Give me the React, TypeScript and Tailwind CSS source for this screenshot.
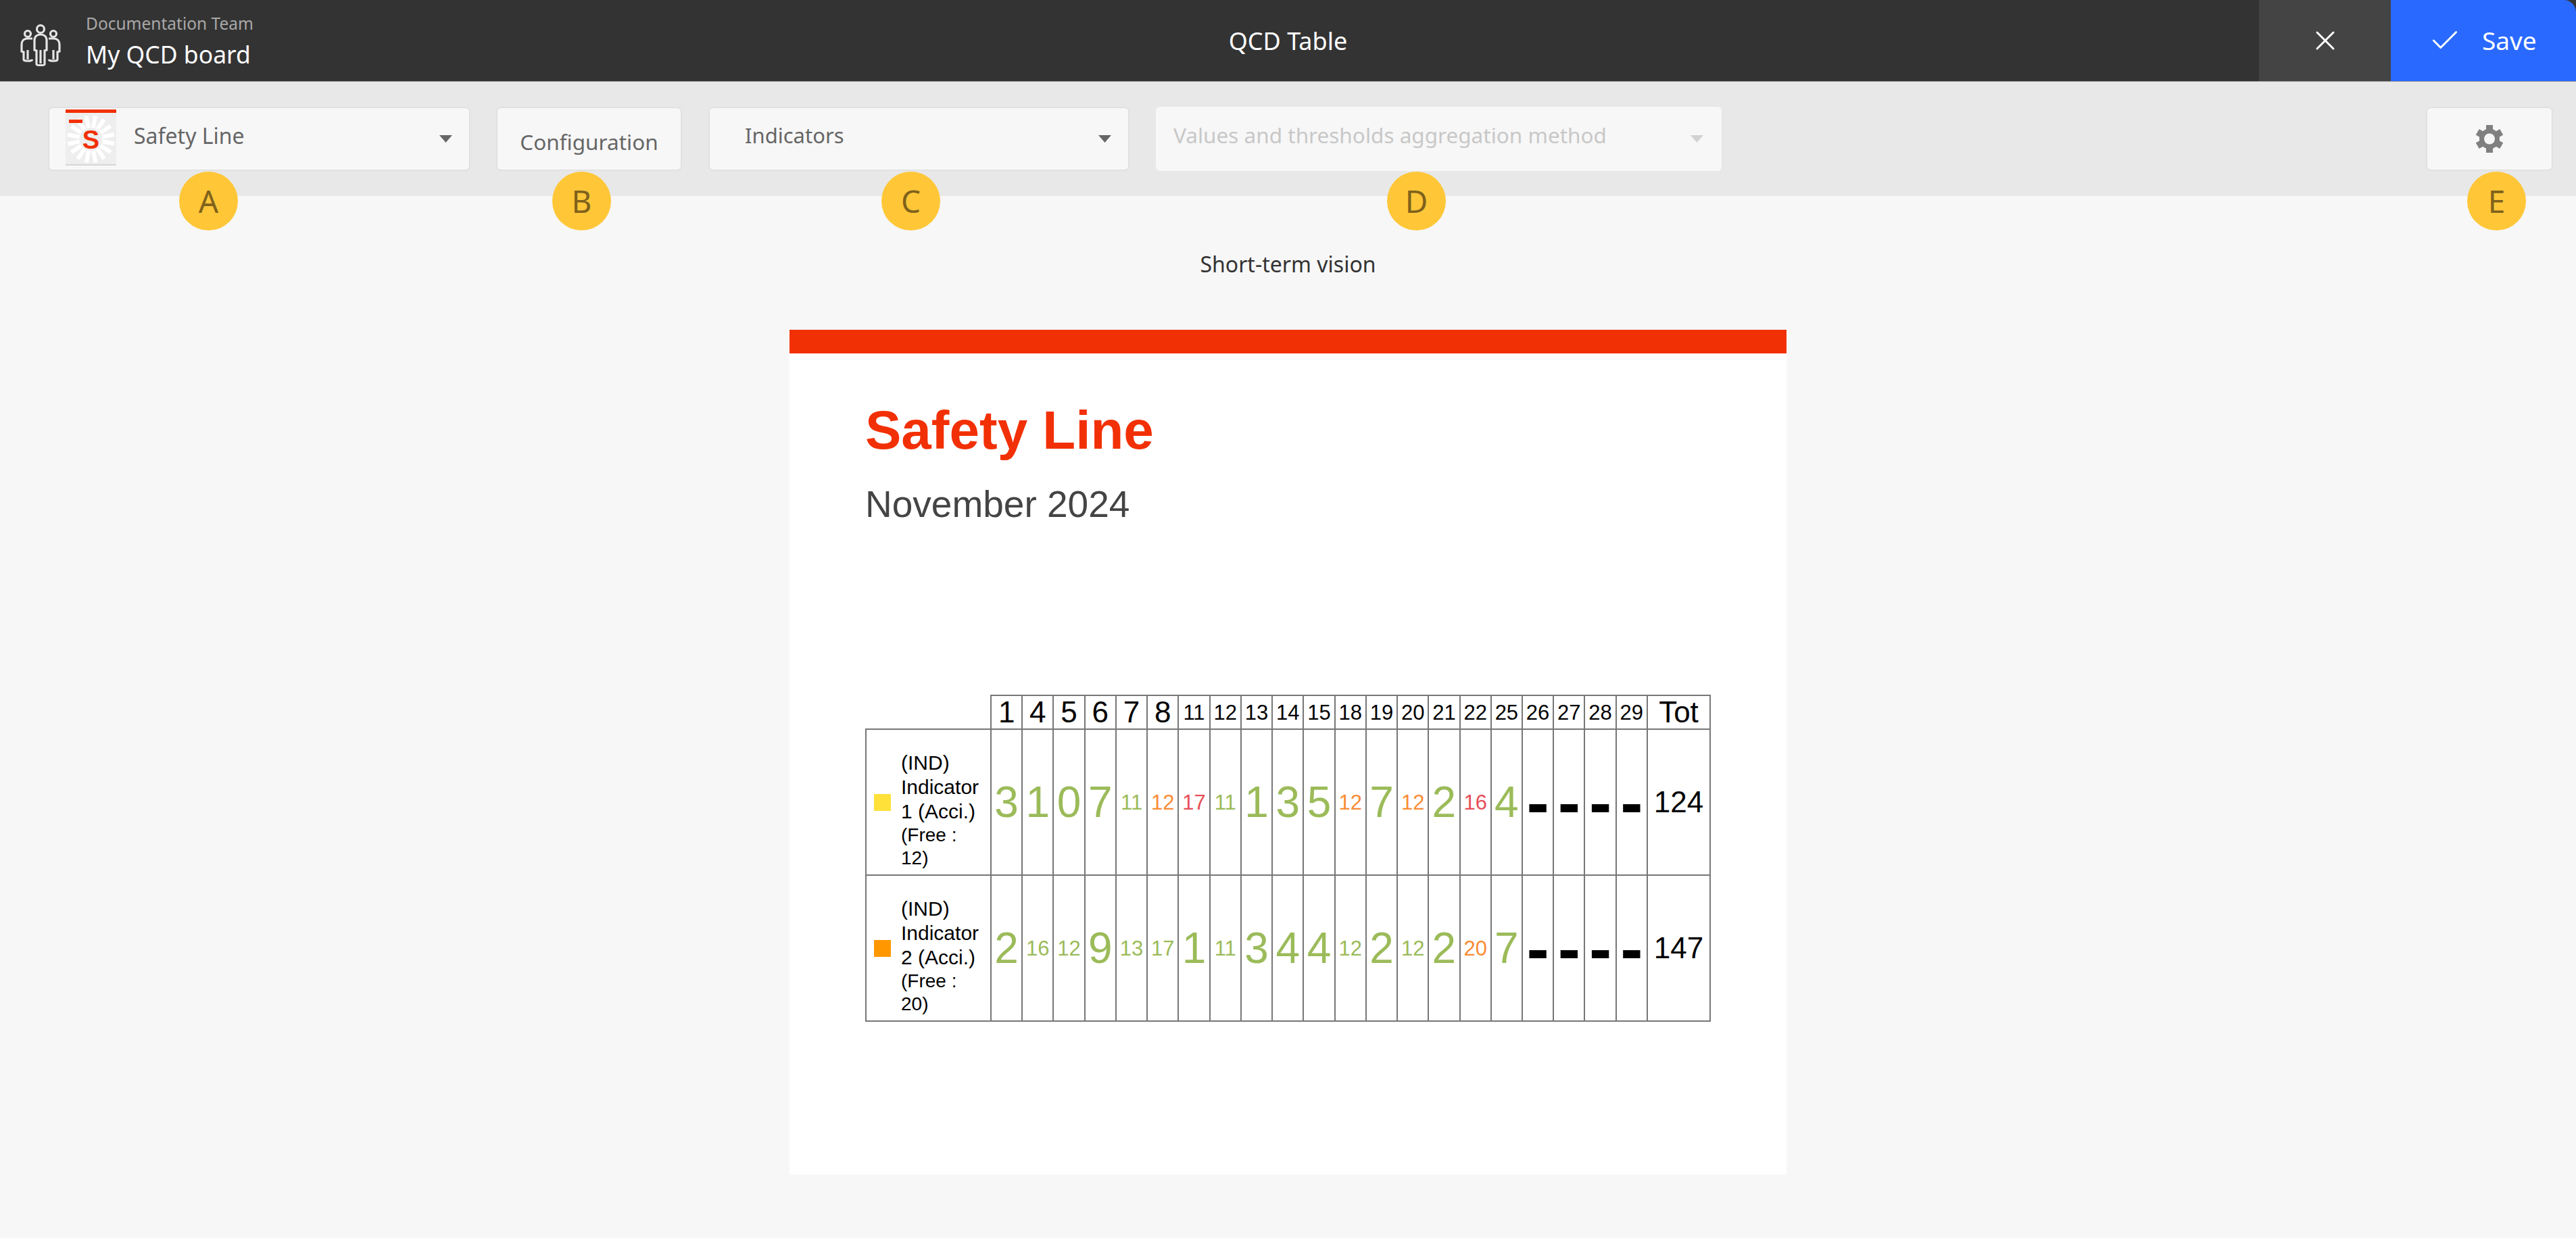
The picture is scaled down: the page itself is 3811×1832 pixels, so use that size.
import { X, Check } from 'lucide-react';

const days = [1, 4, 5, 6, 7, 8, 11, 12, 13, 14, 15, 18, 19, 20, 21, 22, 25, 26, 27, 28, 29];

const rows = [
  {
    swatch: 'bg-[#ffe13a]',
    num: 1,
    free: 12,
    total: 124,
    values: [
      [3, 'g'], [1, 'g'], [0, 'g'], [7, 'g'], [11, 'g'], [12, 'o'], [17, 'r'], [11, 'g'], [1, 'g'], [3, 'g'], [5, 'g'],
      [12, 'o'], [7, 'g'], [12, 'o'], [2, 'g'], [16, 'r'], [4, 'g'],
    ],
  },
  {
    swatch: 'bg-[#ff9800]',
    num: 2,
    free: 20,
    total: 147,
    values: [
      [2, 'g'], [16, 'g'], [12, 'g'], [9, 'g'], [13, 'g'], [17, 'g'], [1, 'g'], [11, 'g'], [3, 'g'], [4, 'g'], [4, 'g'],
      [12, 'g'], [2, 'g'], [12, 'g'], [2, 'g'], [20, 'o'], [7, 'g'],
    ],
  },
] as { swatch: string; num: number; free: number; total: number; values: [number, string][] }[];

const tones: Record<string, string> = { g: 'text-[#9bbb59]', o: 'text-[#f98c35]', r: 'text-[#e64f57]' };

function TeamIcon() {
  return (
    <svg viewBox="0 0 62 62" className="w-[62px] h-[62px]" fill="none" stroke="#e4e4e4" strokeWidth="3.2">
      <circle cx="31" cy="7" r="5.5" />
      <circle cx="12" cy="14" r="4.5" />
      <circle cx="50" cy="14" r="4.5" />
      <path d="M22 24c0-6 4-9 9-9s9 3 9 9v14l-3 1v20c0 2-12 2-12 0V39l-3-1z" />
      <path d="M31 38v20" />
      <path d="M19 21h-7c-6 0-9 4-9 9v10l3 1v11c0 3 12 3 13 0" />
      <path d="M43 21h7c6 0 9 4 9 9v10l-3 1v11c0 3-12 3-13 0" />
      <path d="M12 38v14M50 38v14" />
    </svg>
  );
}

function Thumb() {
  const ticks = Array.from({ length: 16 }, (_, i) => i * 22.5 + 11);
  return (
    <svg viewBox="0 0 75 83" className="w-[75px] h-[83px] shrink-0">
      <rect width="75" height="83" fill="#eeeeee" />
      <rect width="75" height="5" fill="#f23005" />
      <rect y="81" width="75" height="2" fill="#d6d6d6" />
      {ticks.map((a) => (
        <rect key={a} x="34.5" y="9" width="6" height="18" fill="#ffffff" transform={`rotate(${a} 37.5 44)`} />
      ))}
      <rect x="5" y="15" width="20" height="5" fill="#f23005" />
      <text x="37.5" y="58" textAnchor="middle" fontFamily="Liberation Sans" fontWeight="700" fontSize="38" fill="#f23005">
        S
      </text>
    </svg>
  );
}

function Gear() {
  return (
    <svg viewBox="0 0 40 41" className="w-[40px] h-[41px]">
      {[0, 60, 120].map((a) => (
        <rect key={a} x="15" y="0" width="10" height="41" fill="#808080" transform={`rotate(${a} 20 20.5)`} />
      ))}
      <circle cx="20" cy="20.5" r="11.5" fill="none" stroke="#808080" strokeWidth="7" />
      <circle cx="20" cy="20.5" r="8" fill="#f7f7f7" />
    </svg>
  );
}

function Caret({ light }: { light?: boolean }) {
  return (
    <svg viewBox="0 0 19 11" className="w-[19px] h-[11px]">
      <path d="M0 0h19L9.5 11z" fill={light ? '#d2d2d2' : '#666666'} />
    </svg>
  );
}

function Badge({ letter, className }: { letter: string; className: string }) {
  return (
    <div
      className={`absolute top-[133px] w-[87px] h-[87px] rounded-full bg-[#ffc738] flex items-center justify-center text-[46px] text-[#80621b] ${className}`}
    >
      {letter}
    </div>
  );
}

export default function App() {
  return (
    <div className="h-screen overflow-hidden bg-[#f7f7f7] font-['Noto_Sans',sans-serif]">
      {/* Header */}
      <header className="h-[121px] bg-[#333333] border-b border-[#9a9a9a] flex items-stretch relative">
        <div className="w-[127px] flex items-center pl-[29px] pt-[13px]">
          <TeamIcon />
        </div>
        <div className="flex-1 pt-[18px]">
          <p className="text-[24.5px] leading-[34px] text-[#a8a8a8]">Documentation Team</p>
          <p className="mt-[4px] text-[35.5px] leading-[48px] text-white">My QCD board</p>
        </div>
        <p className="absolute left-0 right-0 top-[37px] text-center text-[36px] leading-[48px] text-white">QCD Table</p>
        <button className="relative w-[195px] bg-[#444444] flex items-center justify-center text-white">
          <X className="w-[48px] h-[48px]" strokeWidth={1.5} />
        </button>
        <button className="relative w-[274px] bg-[#2969ff] rounded-tr-[18px] flex items-center pl-[55px] gap-[30px] text-white text-[37px]">
          <Check className="w-[50px] h-[50px]" strokeWidth={1.4} />
          Save
        </button>
      </header>

      {/* Toolbar */}
      <div className="relative h-[169px] bg-[#e8e8e8] flex items-start pt-[38px] pl-[72px] pr-[35px] text-[#666666] text-[31.5px]">
        <div className="w-[623px] h-[93px] rounded-[6px] border border-[#dedede] shadow-[0_0_2px_#d8d8d8] bg-[#f7f7f7] flex items-start pl-[24px] pr-[25px]">
          <div className="pt-[2px]">
            <Thumb />
          </div>
          <span className="ml-[26px] pt-[17px] text-[32px]">Safety Line</span>
          <div className="ml-auto pt-[40px]">
            <Caret />
          </div>
        </div>
        <div className="ml-[40px] w-[273px] h-[93px] rounded-[6px] border border-[#dedede] shadow-[0_0_2px_#d8d8d8] bg-[#f7f7f7] flex items-start justify-center pt-[26px]">
          Configuration
        </div>
        <div className="ml-[41px] w-[621px] h-[93px] rounded-[6px] border border-[#dedede] shadow-[0_0_2px_#d8d8d8] bg-[#f7f7f7] flex items-start pl-[52px] pr-[25px] pt-[17px] text-[31px]">
          Indicators
          <div className="ml-auto pt-[23px]">
            <Caret />
          </div>
        </div>
        <div className="ml-[40px] w-[837px] h-[95px] -mt-[1px] rounded-[6px] bg-[#f7f7f7] flex items-start pl-[26px] pr-[27px] pt-[18px] text-[#c8c8c8]">
          Values and thresholds aggregation method
          <div className="ml-auto pt-[24px]">
            <Caret light />
          </div>
        </div>
        <div className="ml-auto w-[186px] h-[93px] rounded-[6px] border border-[#dedede] shadow-[0_0_2px_#d8d8d8] bg-[#f7f7f7] flex items-center justify-center">
          <Gear />
        </div>
        <Badge letter="A" className="left-[265px]" />
        <Badge letter="B" className="left-[817px]" />
        <Badge letter="C" className="left-[1304px]" />
        <Badge letter="D" className="left-[2052px]" />
        <Badge letter="E" className="left-[3650px]" />
      </div>

      {/* Body */}
      <p className="mt-[81px] text-center text-[32px] leading-[40px] text-[#333333]">Short-term vision</p>
      <main className="mt-[77px] mx-auto w-[1475px] h-[1250px] bg-white font-['Liberation_Sans',sans-serif]">
        <div className="h-[35px] bg-[#f23005]" />
        <div className="pl-[112px]">
          <h1 className="pt-[68px] text-[80px] leading-[92px] font-bold text-[#f23005]">Safety Line</h1>
          <p className="mt-[31px] text-[55px] leading-[64px] text-[#444444]">November 2024</p>

          <table className="mt-[250px] table-fixed border-collapse w-[1251px] text-black">
            <colgroup>
              <col className="w-[185px]" />
              {days.map((d) => (
                <col key={d} />
              ))}
              <col className="w-[93px]" />
            </colgroup>
            <thead>
              <tr className="h-[50px]">
                <th />
                {days.map((d) => (
                  <th key={d} className={`border-2 border-[#777777] p-0 font-normal ${d < 10 ? 'text-[44px]' : 'text-[31px]'} leading-none`}>
                    {d}
                  </th>
                ))}
                <th className="border-2 border-[#777777] p-0 font-normal text-[44px] leading-none">Tot</th>
              </tr>
            </thead>
            <tbody>
              {rows.map((row) => (
                <tr key={row.num} className="h-[216px]">
                  <td className="border-2 border-[#777777] p-0">
                    <div className="flex items-center pl-[11px]">
                      <span className={`w-[25px] h-[25px] shrink-0 ${row.swatch}`} />
                      <div className="ml-[15px] pt-[24px] text-[30px] leading-[36px]">
                        (IND)
                        <br />
                        Indicator
                        <br />
                        {row.num} (Acci.)
                        <div className="text-[28px] leading-[34px]">
                          (Free :
                          <br />
                          {row.free})
                        </div>
                      </div>
                    </div>
                  </td>
                  {row.values.map(([v, tone], i) => (
                    <td
                      key={i}
                      className={`border-2 border-[#777777] p-0 text-center leading-none ${tones[tone]} ${v < 10 ? 'text-[64px]' : 'text-[31px]'}`}
                    >
                      {v}
                    </td>
                  ))}
                  {[0, 1, 2, 3].map((i) => (
                    <td key={i} className="border-2 border-[#777777] p-0 text-center text-[100px] font-bold leading-none">
                      -
                    </td>
                  ))}
                  <td className="border-2 border-[#777777] p-0 text-center text-[44px] leading-none">{row.total}</td>
                </tr>
              ))}
            </tbody>
          </table>
        </div>
      </main>
    </div>
  );
}
